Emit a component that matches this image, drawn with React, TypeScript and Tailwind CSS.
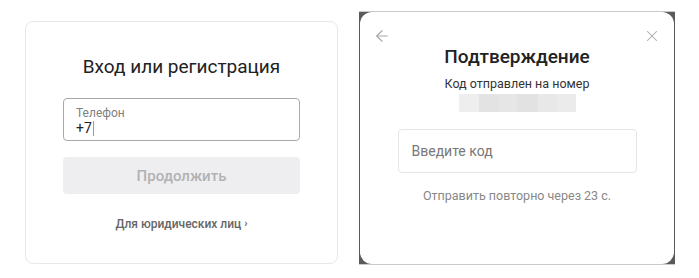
import { ArrowLeft, X } from "lucide-react";

function LoginCard() {
  return (
    <div className="w-[313px] h-[243px] ml-[25px] mt-[21px] border border-[#e8e8e8] rounded-lg bg-white flex flex-col items-center">
      <h1 className="mt-[33px] text-[19px] leading-6 text-[#222]">Вход или регистрация</h1>
      <div className="mt-[19px] w-[237px] h-[43px] border border-[#a9a9a9] rounded-[4px] px-[12px] pt-[7px]">
        <div className="text-[12px] leading-[14px] text-[#808080]">Телефон</div>
        <div className="flex items-center text-[14px] leading-[16px] text-[#222]">
          +7<span className="w-px h-[15px] bg-[#6aa0ff] ml-px" />
        </div>
      </div>
      <button className="mt-[16px] w-[237px] h-[37px] rounded-[4px] bg-[#eeeef1] text-[15px] font-medium text-[#b2b2b2] pt-[2px]">
        Продолжить
      </button>
      <a className="mt-[21px] text-[12px] font-medium text-[#666] flex items-center gap-[3px]">
        Для юридических лиц <span className="text-[11px] font-bold">›</span>
      </a>
    </div>
  );
}

function ConfirmModal() {
  return (
    <div className="ml-[21px] mt-[11px] w-[316px] h-[254px] bg-[#5a5a5a] border-t border-b border-[#c9c9c9]">
      <div className="h-full ml-px mr-px bg-white rounded-[12px] flex flex-col items-center relative">
        <ArrowLeft className="absolute left-[13px] top-[15px] text-[#a8a8a8]" size={18} strokeWidth={1.5} />
        <X className="absolute right-[13px] top-[15px] text-[#a8a8a8]" size={18} strokeWidth={1.4} />
        <h2 className="mt-[33px] text-[19px] leading-6 font-medium text-[#222]">Подтверждение</h2>
        <p className="mt-[7px] text-[12.5px] leading-[16px] text-[#333]">Код отправлен на номер</p>
        <div className="mt-[2px] flex h-[18px]">
          <div className="w-[20px] bg-[#eeeeee]" />
          <div className="w-[19px] bg-[#e3e3e3]" />
          <div className="w-[19px] bg-[#e6e6e6]" />
          <div className="w-[21px] bg-[#e2e2e2]" />
          <div className="w-[19px] bg-[#e8e8e8]" />
          <div className="w-[19px] bg-[#ebebeb]" />
        </div>
        <div className="mt-[17px] w-[239px] h-[44px] border border-[#e6e6e6] rounded-[4px] flex items-center px-[13px]">
          <span className="text-[14px] text-[#777]">Введите код</span>
        </div>
        <p className="mt-[14px] text-[12.5px] text-[#888]">Отправить повторно через 23 с.</p>
      </div>
    </div>
  );
}

export default function App() {
  return (
    <div className="w-[699px] h-[278px] bg-white flex items-start" style={{ fontFamily: "Roboto, sans-serif" }}>
      <LoginCard />
      <ConfirmModal />
    </div>
  );
}
